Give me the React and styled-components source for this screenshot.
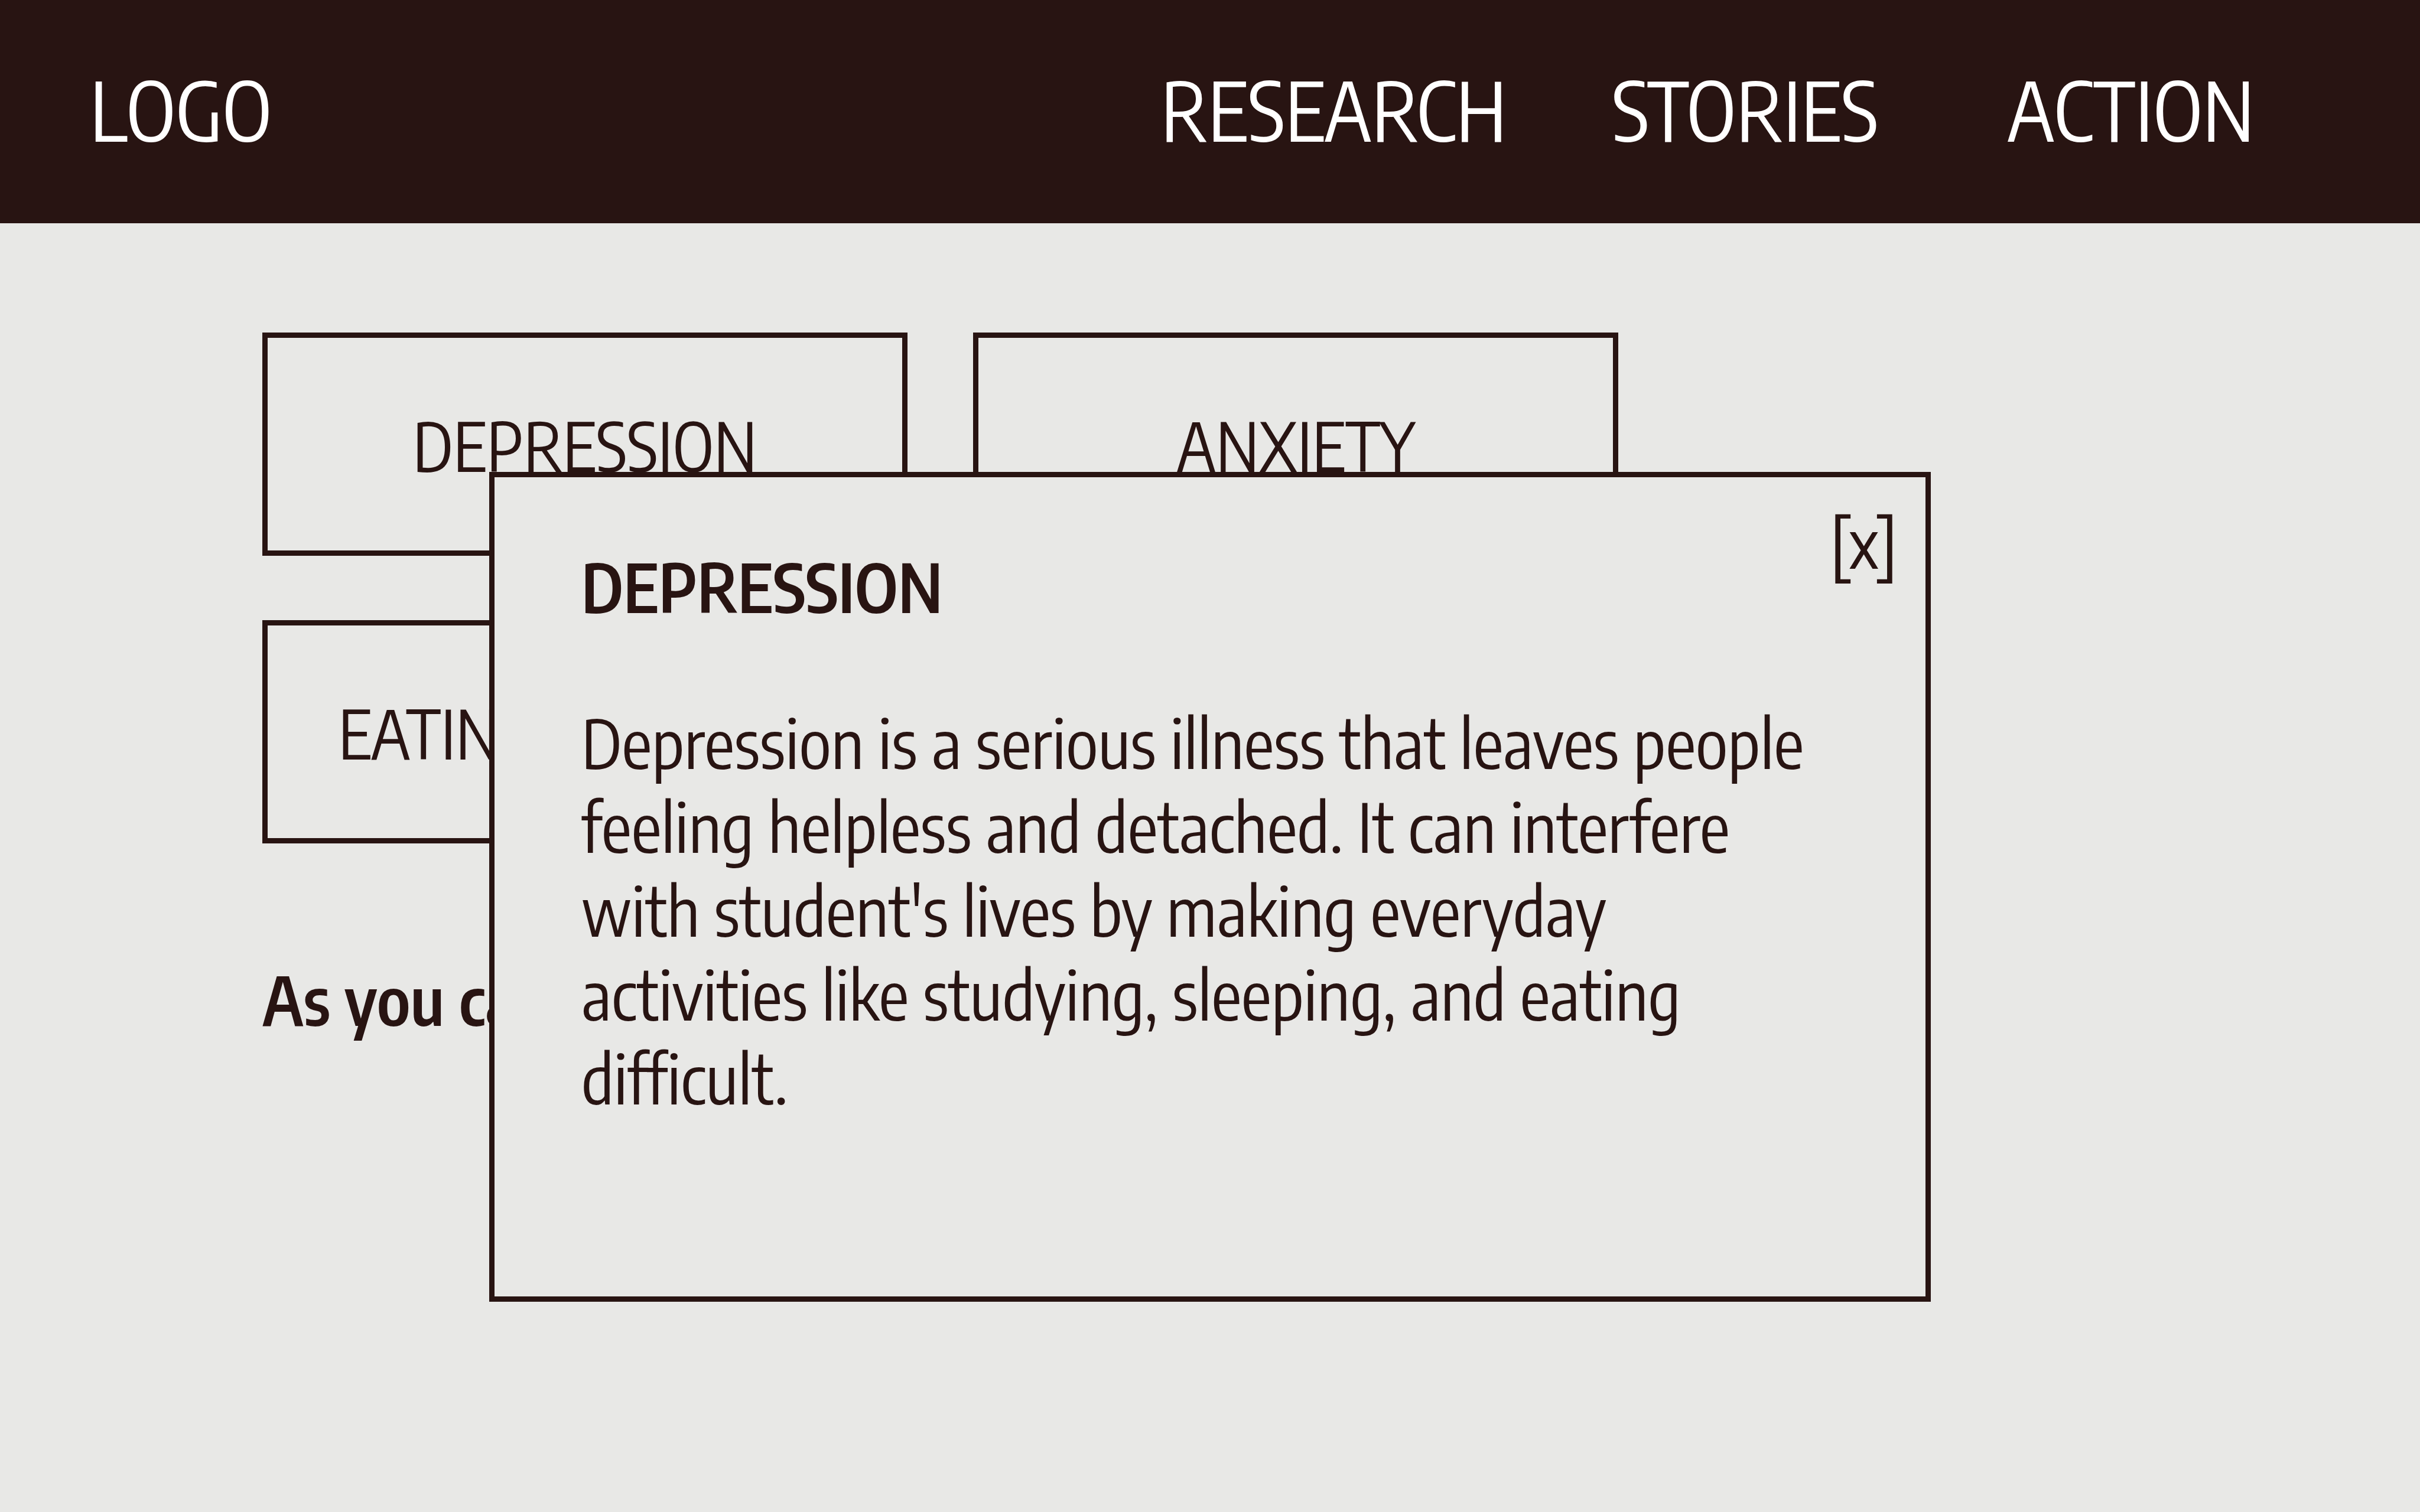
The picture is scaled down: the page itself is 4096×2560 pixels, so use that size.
import React, { useState } from "react";
import styled, { createGlobalStyle, ThemeProvider } from "styled-components";

const theme = {
  ink: "#281412",
  paper: "#e8e8e6",
  white: "#ffffff",
  navSize: "137px",
  navLine: "171px",
  textSize: "114px",
  textLine: "142px",
  stroke: "9px",
};

const GlobalStyle = createGlobalStyle`
  *, *::before, *::after { box-sizing: border-box; }
  body {
    margin: 0;
    background: ${theme.paper};
    color: ${theme.ink};
    font-family: "Encode Sans Condensed", "Roboto Condensed", "Open Sans", sans-serif;
    font-size: ${theme.textSize};
    line-height: ${theme.textLine};
  }
  button { font: inherit; color: inherit; }
`;

const Page = styled.div`
  display: flex;
  flex-direction: column;
  min-height: 100vh;
`;

const Header = styled.header`
  display: flex;
  align-items: center;
  justify-content: space-between;
  min-height: 378px;
  padding: 0 280px 10px 152px;
  background: ${({ theme }) => theme.ink};
  font-size: ${({ theme }) => theme.navSize};
  line-height: ${({ theme }) => theme.navLine};
`;

const Nav = styled.nav`
  display: flex;
  gap: 178px;
`;

const HeaderLink = styled.a`
  color: ${({ theme }) => theme.white};
  text-decoration: none;
`;

const ActionLink = styled(HeaderLink)`
  margin-left: 40px;
`;

const Main = styled.main`
  position: relative;
  flex: 1;
  padding: 185px 444px;
`;

const TopicGrid = styled.div`
  display: grid;
  grid-template-columns: repeat(2, minmax(0, 1092px));
  gap: 109px 111px;
`;

const TopicButton = styled.button`
  min-height: 378px;
  padding: 2px 0 0;
  border: ${({ theme }) => theme.stroke} solid ${({ theme }) => theme.ink};
  background: transparent;
  white-space: nowrap;
  cursor: pointer;
`;

const Lead = styled.p`
  margin: 192px 0 0;
  font-weight: 600;
`;

const Dialog = styled.section`
  position: absolute;
  top: 421px;
  left: 0;
  right: 0;
  width: 2440px;
  max-width: 100%;
  min-height: 1405px;
  margin: 0 auto;
  padding: 113px 160px 113px 147px;
  border: ${({ theme }) => theme.stroke} solid ${({ theme }) => theme.ink};
  background: ${({ theme }) => theme.paper};
`;

const DialogTitle = styled.h2`
  margin: 0 0 122px;
  font-size: inherit;
  font-weight: 600;
`;

const DialogText = styled.p`
  margin: 0;
`;

const CloseButton = styled.button`
  position: absolute;
  top: 38px;
  right: 47px;
  padding: 0;
  border: 0;
  background: transparent;
  cursor: pointer;
`;

const topics = ["DEPRESSION", "ANXIETY", "EATING DISORDER"];

export default function App() {
  const [open, setOpen] = useState(true);

  return (
    <ThemeProvider theme={theme}>
      <GlobalStyle />
      <Page>
        <Header>
          <HeaderLink href="#home">LOGO</HeaderLink>
          <Nav>
            <HeaderLink href="#research">RESEARCH</HeaderLink>
            <HeaderLink href="#stories">STORIES</HeaderLink>
            <ActionLink href="#action">ACTION</ActionLink>
          </Nav>
        </Header>
        <Main>
          <TopicGrid>
            {topics.map((topic) => (
              <TopicButton key={topic} type="button" onClick={() => setOpen(true)}>
                {topic}
              </TopicButton>
            ))}
          </TopicGrid>
          <Lead>As you can</Lead>
          {open && (
            <Dialog role="dialog" aria-labelledby="dialog-title">
              <DialogTitle id="dialog-title">DEPRESSION</DialogTitle>
              <DialogText>
                Depression is a serious illness that leaves people feeling helpless and
                detached. It can interfere with student's lives by making everyday
                activities like studying, sleeping, and eating difficult.
              </DialogText>
              <CloseButton type="button" aria-label="Close [x]" onClick={() => setOpen(false)}>
                [x]
              </CloseButton>
            </Dialog>
          )}
        </Main>
      </Page>
    </ThemeProvider>
  );
}
